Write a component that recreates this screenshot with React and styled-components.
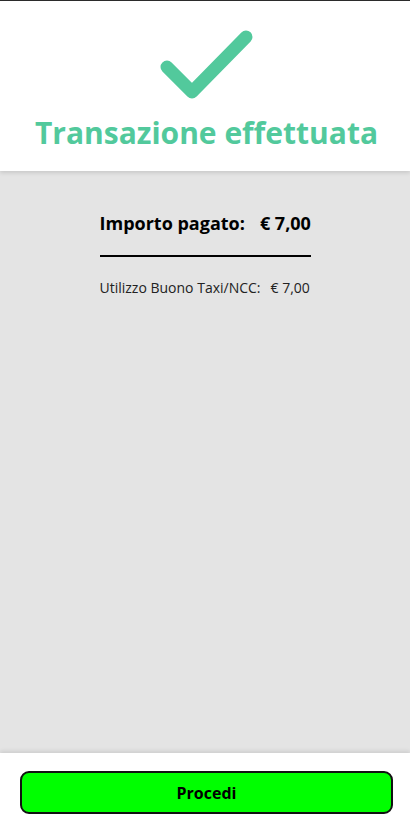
import React from 'react';
import styled, { createGlobalStyle } from 'styled-components';

const GlobalStyle = createGlobalStyle`
  html, body {
    margin: 0;
    padding: 0;
  }
  body {
    font-family: 'Open Sans', 'Liberation Sans', sans-serif;
    background: #e4e4e4;
  }
`;

const Page = styled.div`
  min-height: 828px;
  display: flex;
  flex-direction: column;
  background: #e4e4e4;
`;

const Header = styled.header`
  height: 171px;
  box-sizing: border-box;
  border-top: 1px solid #2b2b2b;
  background: #fff;
  display: flex;
  flex-direction: column;
  align-items: center;
  padding-top: 24px;
  box-shadow: 0 2px 4px rgba(0, 0, 0, 0.12);
  position: relative;
  z-index: 1;
`;

const Title = styled.h1`
  margin: 14px 0 0 3px;
  font-size: 30px;
  font-weight: 700;
  color: #52c99c;
  line-height: 1.2;
`;

const Main = styled.main`
  flex: 1;
  display: flex;
  justify-content: center;
  padding-top: 40px;
`;

const Summary = styled.div`
  width: 211px;
  display: flex;
  flex-direction: column;
`;

const Row = styled.div`
  display: flex;
  gap: ${({ $gap }) => $gap}px;
  white-space: nowrap;
  font-size: ${({ $size }) => $size}px;
  font-weight: ${({ $bold }) => ($bold ? 700 : 400)};
  color: ${({ $bold }) => ($bold ? '#000' : '#222')};
  line-height: 1.4;

  span {
    flex-shrink: 0;
  }
`;

const Divider = styled.hr`
  width: 100%;
  height: 2px;
  border: 0;
  margin: 19px 0 21px;
  background: #000;
`;

const Footer = styled.footer`
  height: 75px;
  background: #fff;
  box-sizing: border-box;
  padding: 18px 17px 0 20px;
  box-shadow: 0 -2px 4px rgba(0, 0, 0, 0.1);
`;

const ProceedButton = styled.button`
  width: 100%;
  height: 43px;
  background: #00ff00;
  border: 2px solid #111;
  border-radius: 9px;
  font-family: 'Open Sans', 'Liberation Sans', sans-serif;
  font-size: 16px;
  font-weight: 700;
  color: #000;
  cursor: pointer;
`;

function CheckIcon() {
  return (
    <svg width="100" height="76" viewBox="0 0 100 76">
      <polyline
        points="12,42 37,67 91,12"
        fill="none"
        stroke="#52c99c"
        strokeWidth="13"
        strokeLinecap="round"
        strokeLinejoin="round"
      />
    </svg>
  );
}

export default function App() {
  return (
    <>
      <GlobalStyle />
      <Page>
        <Header>
          <CheckIcon />
          <Title>Transazione effettuata</Title>
        </Header>
        <Main>
          <Summary>
            <Row $size={18} $gap={15} $bold>
              <span>Importo pagato:</span>
              <span>€ 7,00</span>
            </Row>
            <Divider />
            <Row $size={14} $gap={10}>
              <span>Utilizzo Buono Taxi/NCC:</span>
              <span>€ 7,00</span>
            </Row>
          </Summary>
        </Main>
        <Footer>
          <ProceedButton>Procedi</ProceedButton>
        </Footer>
      </Page>
    </>
  );
}
